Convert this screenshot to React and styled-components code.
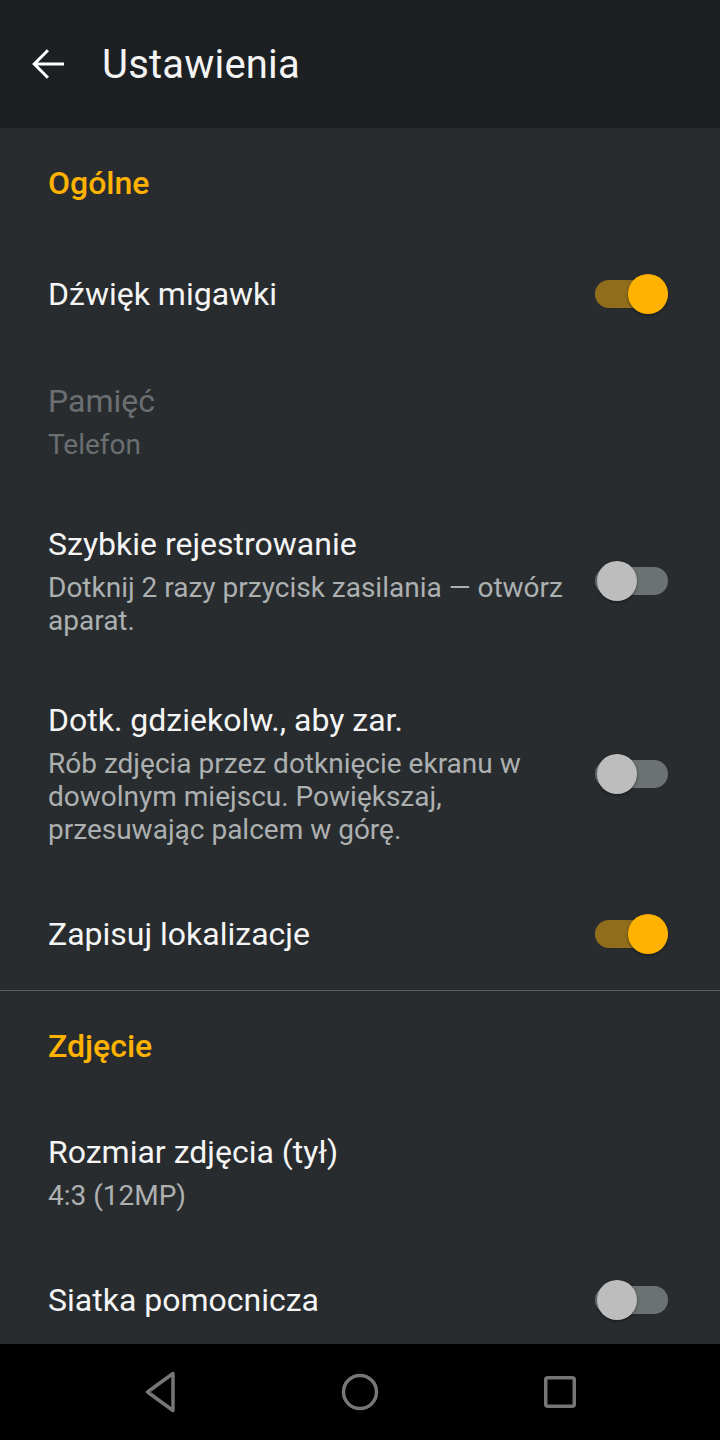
import React from "react";
import styled, { createGlobalStyle } from "styled-components";

const Global = createGlobalStyle`
  html, body { margin: 0; padding: 0; background: #000; }
  body { font-family: Roboto, "Noto Sans", sans-serif; -webkit-font-smoothing: antialiased; }
  * { box-sizing: border-box; }
`;

const Screen = styled.div`
  width: 720px;
  height: 1440px;
  display: flex;
  flex-direction: column;
  background: #282c2f;
  overflow: hidden;
`;

const AppBar = styled.header`
  height: 128px;
  flex: none;
  display: flex;
  align-items: center;
  background: #1d2023;
  padding-left: 24px;
`;

const BackButton = styled.button`
  width: 48px;
  height: 48px;
  padding: 0;
  border: none;
  background: none;
  display: flex;
  align-items: center;
  justify-content: center;
  margin-right: 30px;
`;

const AppTitle = styled.h1`
  margin: 0;
  font-size: 40px;
  font-weight: 400;
  color: #f4f4f4;
  letter-spacing: 0.2px;
`;

const Content = styled.main`
  flex: 1;
  overflow: hidden;
  display: flex;
  flex-direction: column;
`;

const Section = styled.section`
  display: flex;
  flex-direction: column;
  border-top: ${(p) => (p.$divided ? "1px solid #5c5f61" : "none")};
`;

const Category = styled.div`
  height: 110px;
  flex: none;
  display: flex;
  align-items: center;
  padding-left: 48px;
  font-size: 32px;
  font-weight: 500;
  color: #ffb300;
`;

const Row = styled.div`
  min-height: 112px;
  flex: none;
  display: flex;
  align-items: center;
  padding: 32px 52px 32px 48px;
`;

const TextCol = styled.div`
  flex: 1;
  min-width: 0;
  padding-right: 32px;
  display: flex;
  flex-direction: column;
`;

const Title = styled.div`
  font-size: 32px;
  line-height: 38px;
  color: ${(p) => (p.$disabled ? "#6b6f72" : "#f5f5f5")};
`;

const Summary = styled.div`
  font-size: 28px;
  line-height: 33px;
  margin-top: 8px;
  color: ${(p) => (p.$disabled ? "#6b6f72" : "#adb0b1")};
`;

const SwitchBox = styled.div`
  position: relative;
  width: 73px;
  height: 40px;
  flex: none;
`;

const Track = styled.div`
  position: absolute;
  left: 0;
  right: 0;
  top: 6px;
  height: 28px;
  border-radius: 14px;
  background: ${(p) => (p.$on ? "#8f6d1b" : "#6c7172")};
`;

const Thumb = styled.div`
  position: absolute;
  top: 0;
  left: ${(p) => (p.$on ? "33px" : "2px")};
  width: 40px;
  height: 40px;
  border-radius: 50%;
  background: ${(p) => (p.$on ? "#ffb300" : "#bdbdbd")};
  box-shadow: 0 1px 3px rgba(0, 0, 0, 0.45);
`;

const NavBar = styled.nav`
  height: 96px;
  flex: none;
  background: #000;
  display: flex;
  align-items: center;
  justify-content: center;
`;

const NavSlot = styled.div`
  width: 200px;
  height: 96px;
  display: flex;
  align-items: center;
  justify-content: center;
`;

const Switch = ({ on }) => (
  <SwitchBox>
    <Track $on={on} />
    <Thumb $on={on} />
  </SwitchBox>
);

const Pref = ({ title, summary, toggle, on, disabled }) => (
  <Row>
    <TextCol>
      <Title $disabled={disabled}>{title}</Title>
      {summary && <Summary $disabled={disabled}>{summary}</Summary>}
    </TextCol>
    {toggle && <Switch on={on} />}
  </Row>
);

export default function App() {
  return (
    <>
      <Global />
      <Screen>
        <AppBar>
          <BackButton aria-label="Wstecz">
            <svg width="48" height="48" viewBox="0 0 24 24">
              <path
                d="M20 11.25H6.9l5.6-5.6-1.05-1.05L4.05 12l7.4 7.4 1.05-1.05-5.6-5.6H20z"
                fill="#ffffff"
              />
            </svg>
          </BackButton>
          <AppTitle>Ustawienia</AppTitle>
        </AppBar>
        <Content>
          <Section>
            <Category>Ogólne</Category>
            <Pref title="Dźwięk migawki" toggle on />
            <Pref title="Pamięć" summary="Telefon" disabled />
            <Pref
              title="Szybkie rejestrowanie"
              summary="Dotknij 2 razy przycisk zasilania — otwórz aparat."
              toggle
            />
            <Pref
              title="Dotk. gdziekolw., aby zar."
              summary="Rób zdjęcia przez dotknięcie ekranu w dowolnym miejscu. Powiększaj, przesuwając palcem w górę."
              toggle
            />
            <Pref title="Zapisuj lokalizacje" toggle on />
          </Section>
          <Section $divided>
            <Category>Zdjęcie</Category>
            <Pref title="Rozmiar zdjęcia (tył)" summary="4:3 (12MP)" />
            <Pref title="Siatka pomocnicza" toggle />
          </Section>
        </Content>
        <NavBar>
          <NavSlot>
            <svg width="40" height="44" viewBox="0 0 40 44">
              <path
                d="M33 3.5 L7.5 22 L33 40.5 Z"
                fill="none"
                stroke="#767676"
                strokeWidth="3.5"
                strokeLinejoin="round"
              />
            </svg>
          </NavSlot>
          <NavSlot>
            <svg width="40" height="40" viewBox="0 0 40 40">
              <circle cx="20" cy="20" r="16.5" fill="none" stroke="#767676" strokeWidth="3.5" />
            </svg>
          </NavSlot>
          <NavSlot>
            <svg width="40" height="40" viewBox="0 0 40 40">
              <rect x="5.75" y="5.75" width="28.5" height="28.5" rx="2" fill="none" stroke="#767676" strokeWidth="3.5" />
            </svg>
          </NavSlot>
        </NavBar>
      </Screen>
    </>
  );
}
